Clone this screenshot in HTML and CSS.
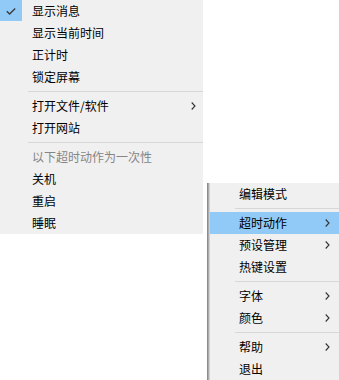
FILE: index.html
```html
<!DOCTYPE html>
<html lang="zh-CN">
<head>
  <meta charset="UTF-8">
  <title>菜单</title>
  <link rel="stylesheet" href="styles.css">
</head>
<body>
  <div class="wrap">
    <!-- 主菜单 -->
    <ul class="menu menu-main">
      <li class="item checked">
        <span class="check">
          <svg width="10" height="7" viewBox="0 0 10 7"><polyline points="0.8,3.2 3.6,6 9.2,0.6" fill="none" stroke="#3c3c3c" stroke-width="1.4"/></svg>
        </span>
        <span class="label">显示消息</span>
      </li>
      <li class="item"><span class="label">显示当前时间</span></li>
      <li class="item"><span class="label">正计时</span></li>
      <li class="item"><span class="label">锁定屏幕</span></li>
      <li class="sep"></li>
      <li class="item sub">
        <span class="label">打开文件/软件</span>
        <svg class="arrow" width="5" height="8" viewBox="0 0 5 8"><polyline points="0.7,0.5 4,4 0.7,7.5" fill="none" stroke="#333" stroke-width="1.1"/></svg>
      </li>
      <li class="item"><span class="label">打开网站</span></li>
      <li class="sep"></li>
      <li class="item disabled"><span class="label">以下超时动作为一次性</span></li>
      <li class="item"><span class="label">关机</span></li>
      <li class="item"><span class="label">重启</span></li>
      <li class="item"><span class="label">睡眠</span></li>
    </ul>

    <!-- 子菜单 -->
    <ul class="menu menu-side">
      <li class="item"><span class="label">编辑模式</span></li>
      <li class="sep"></li>
      <li class="item sub hover">
        <span class="label">超时动作</span>
        <svg class="arrow" width="5" height="8" viewBox="0 0 5 8"><polyline points="0.7,0.5 4,4 0.7,7.5" fill="none" stroke="#333" stroke-width="1.1"/></svg>
      </li>
      <li class="item sub">
        <span class="label">预设管理</span>
        <svg class="arrow" width="5" height="8" viewBox="0 0 5 8"><polyline points="0.7,0.5 4,4 0.7,7.5" fill="none" stroke="#333" stroke-width="1.1"/></svg>
      </li>
      <li class="item"><span class="label">热键设置</span></li>
      <li class="sep"></li>
      <li class="item sub">
        <span class="label">字体</span>
        <svg class="arrow" width="5" height="8" viewBox="0 0 5 8"><polyline points="0.7,0.5 4,4 0.7,7.5" fill="none" stroke="#333" stroke-width="1.1"/></svg>
      </li>
      <li class="item sub">
        <span class="label">颜色</span>
        <svg class="arrow" width="5" height="8" viewBox="0 0 5 8"><polyline points="0.7,0.5 4,4 0.7,7.5" fill="none" stroke="#333" stroke-width="1.1"/></svg>
      </li>
      <li class="sep"></li>
      <li class="item sub">
        <span class="label">帮助</span>
        <svg class="arrow" width="5" height="8" viewBox="0 0 5 8"><polyline points="0.7,0.5 4,4 0.7,7.5" fill="none" stroke="#333" stroke-width="1.1"/></svg>
      </li>
      <li class="item"><span class="label">退出</span></li>
    </ul>
  </div>
</body>
</html>
```

FILE: styles.css
```css
/* reset */
*{
  margin: 0;
  padding: 0;
  box-sizing: border-box;
}
html, body{
  background-color: #fff;
  width: 339px;
  height: 380px;
  overflow: hidden;
}
body{
  font-family: "Noto Sans CJK SC", "Noto Sans", sans-serif;
  font-size: 12px;
  color: #000;
}
li{
  list-style: none;
}
.wrap{
  display: flex;
  align-items: flex-start;
  gap: 4px;
}
.menu{
  background-color: #f0f0f0;
}
.menu-main{
  width: 203px;
  height: 234px;
}
.menu-side{
  flex: 1;
  margin-top: 183px;
  height: 197px;
  padding-left: 3px;
  /* 左边的阴影 */
  background: linear-gradient(to right, #8c8c8c 0 1px, #ababab 1px 2px, #d0d0d0 2px 3px, #f0f0f0 3px);
}
.item{
  position: relative;
  display: flex;
  align-items: center;
  justify-content: space-between;
  height: 22px;
  line-height: 22px;
  padding-left: 32px;
  padding-right: 7px;
}
.menu-side .item{
  padding-left: 29px;
  padding-right: 9px;
}
.item .label{
  white-space: nowrap;
}
.item.disabled{
  color: #858585;
}
.item.hover{
  background-color: #91c9f7;
}
/* 勾选框 */
.check{
  position: absolute;
  left: 0;
  top: 0;
  width: 22px;
  height: 21px;
  background-color: #91c9f7;
  display: flex;
  align-items: center;
  justify-content: center;
}
.check svg{
  margin-top: 2px;
}
.arrow{
  display: block;
}
.sep{
  height: 7px;
  padding-top: 3px;
  margin-left: 28px;
}
.menu-side .sep{
  margin-left: 25px;
}
.sep::before{
  content: "";
  display: block;
  height: 1px;
  background-color: #d7d7d7;
}
```
